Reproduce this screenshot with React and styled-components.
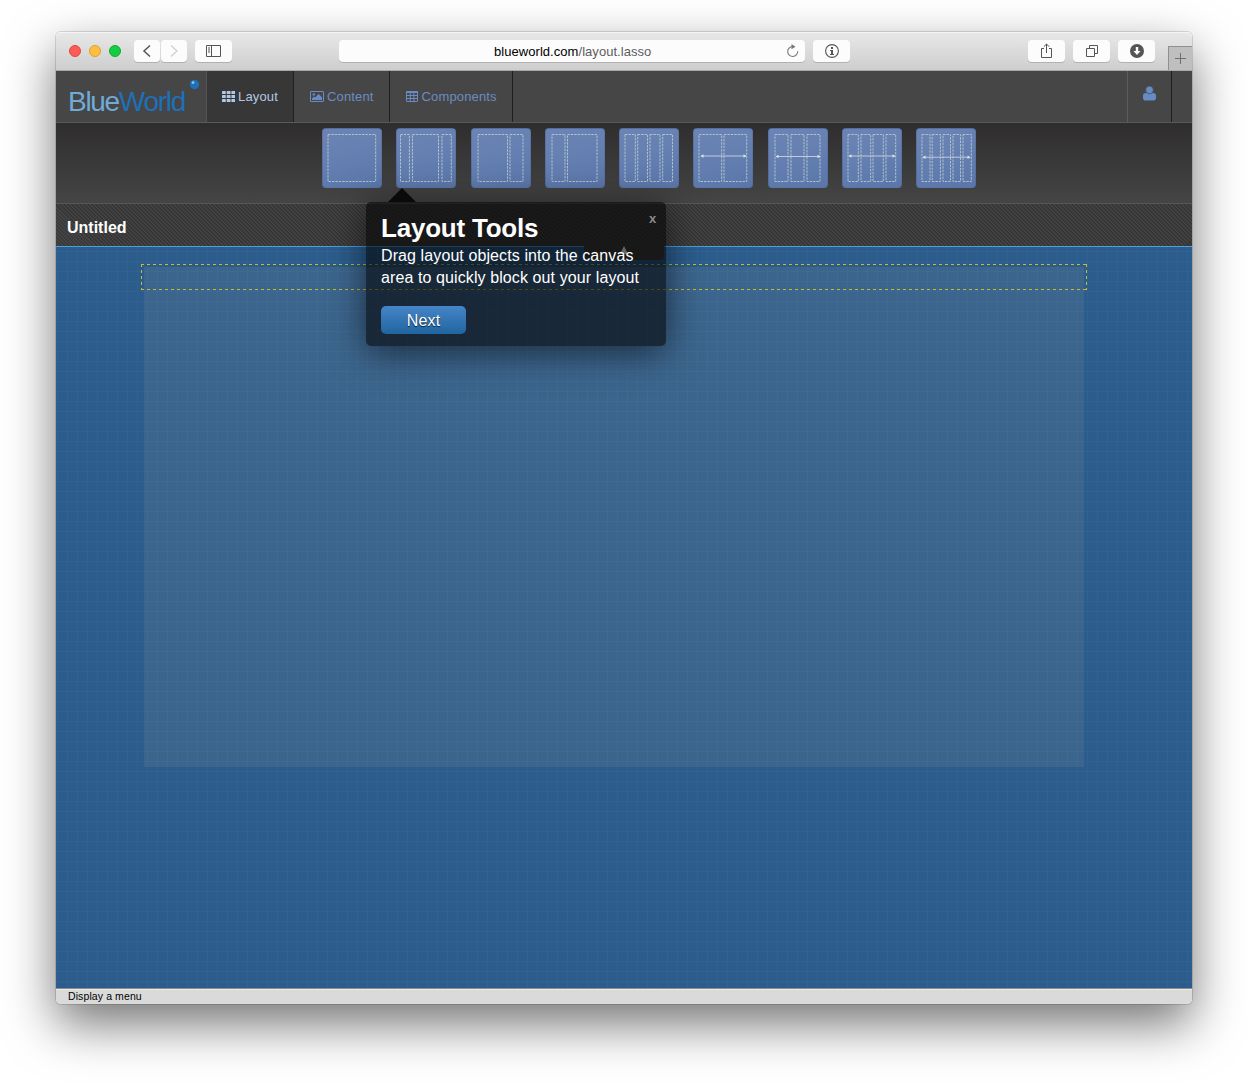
import React from "react";
import styled, { createGlobalStyle, css } from "styled-components";

const GlobalStyle = createGlobalStyle`
  * { box-sizing: border-box; }
  body {
    margin: 0;
    background: #fff;
    font-family: "Liberation Sans", Arial, sans-serif;
    overflow: hidden;
  }
  svg { display: block; flex: none; }
`;

const Desktop = styled.div`
  height: 1084px;
  padding: 32px 56px 80px;
`;

const Window = styled.div`
  position: relative;
  display: flex;
  flex-direction: column;
  width: 1136px;
  height: 972px;
  border-radius: 5px;
  box-shadow: 0 0 0 1px rgba(0, 0, 0, 0.13), 0 20px 50px rgba(0, 0, 0, 0.55);
`;

/* Browser chrome */

const Chrome = styled.header`
  display: flex;
  align-items: flex-start;
  height: 39px;
  padding: 8px 0 0 13px;
  border-radius: 5px 5px 0 0;
  border-bottom: 1px solid #a9a9a9;
  background: linear-gradient(#e8e8e8, #cecece);
  box-shadow: inset 0 1px 0 #f5f5f5;
`;

const Lights = styled.div`
  display: flex;
  gap: 8px;
  padding-top: 5px;
  margin-right: 13px;
`;

const Light = styled.i`
  width: 12px;
  height: 12px;
  border-radius: 50%;
  background: ${(p) => p.$fill};
  border: 1px solid ${(p) => p.$edge};
`;

const ChromeButton = styled.button`
  display: flex;
  align-items: center;
  justify-content: center;
  width: ${(p) => p.$w || 37}px;
  height: 22px;
  margin: 0 ${(p) => p.$after || 0}px 0 0;
  padding: 0;
  border: 0;
  border-radius: 4px;
  background: #fcfcfc;
  color: #555;
  box-shadow: 0 1px 0 rgba(0, 0, 0, 0.16);
`;

const Address = styled.div`
  display: flex;
  align-items: center;
  width: 466px;
  height: 22px;
  margin: 0 8px 0 107px;
  padding: 1px 6px 0 155px;
  border-radius: 4px;
  background: #fcfcfc;
  box-shadow: 0 1px 0 rgba(0, 0, 0, 0.16);
  color: #000;
  font-size: 13px;
  letter-spacing: 0.05px;
  white-space: nowrap;

  span { color: #5c5c5c; }
  svg { margin: -2px 0 0 auto; }
`;

const Spacer = styled.div`
  flex: 1;
`;

const NewTab = styled.div`
  display: flex;
  align-items: center;
  justify-content: center;
  width: 24px;
  height: 24px;
  margin: 6px 0 0 5px;
  border: solid #8f8f8f;
  border-width: 1px 0 0 1px;
  background: #bfbfbf;
`;

/* Application */

const NavBar = styled.nav`
  display: flex;
  height: 52px;
  background: #464646;
  border-bottom: 1px solid #5a5a5a;
`;

const Brand = styled.div`
  display: flex;
  width: 151px;
  padding: 15px 0 0 12px;
  border-right: 1px solid #545454;
  color: #1f6fb9;
  font-size: 28px;
  line-height: 32px;
  letter-spacing: -1.3px;
  white-space: nowrap;

  b { font-weight: 400; color: #6fabd9; }
  svg { margin: -7px 0 0 4px; }
`;

const Tab = styled.a`
  display: flex;
  align-items: center;
  gap: ${(p) => p.$gap || 3}px;
  width: ${(p) => p.$w}px;
  padding: 0 0 0 ${(p) => (p.$active ? 15 : 16)}px;
  border-right: 1px solid #1f1f1f;
  color: #6a8cc4;
  font-size: 13px;
  letter-spacing: 0.15px;
  white-space: nowrap;
  ${(p) =>
    p.$active &&
    css`
      background: #373737;
      color: #b0c9e2;
    `}
`;

const Account = styled.div`
  display: flex;
  justify-content: center;
  width: 45px;
  margin: 0 20px 0 auto;
  padding-top: 15px;
  border-left: 1px solid #5c5c5c;
  border-right: 1px solid #1f1f1f;
`;

const Palette = styled.div`
  display: flex;
  justify-content: center;
  gap: 14.25px;
  height: 81px;
  padding: 5px 0 0 50px;
  background: linear-gradient(#2f2d2e, #454545);
  border-bottom: 1px solid #575757;
`;

const Tile = styled.div`
  width: 60px;
  height: 60px;
  border-radius: 4px;
  border: 1px solid rgba(55, 75, 120, 0.25);
  background: linear-gradient(165deg, #6c84b5, #6680b2 40%, #5a76aa);

  svg { margin: -1px; }
`;

const TitleBar = styled.h2`
  display: flex;
  align-items: center;
  height: 43px;
  margin: 0;
  padding: 5px 0 0 11px;
  border-bottom: 1px solid #4a9fdc;
  color: #fff;
  font-size: 16px;
  letter-spacing: 0;
  background-color: #3e3e3e;
  background-image:
    repeating-linear-gradient(45deg, rgba(0, 0, 0, 0.18) 0 1.4px, transparent 1.4px 2.83px),
    repeating-linear-gradient(-45deg, rgba(255, 255, 255, 0.06) 0 0.7px, transparent 0.7px 2.12px);
`;

const Canvas = styled.main`
  flex: 1;
  padding: 17px 105px 0 85px;
  background-color: #2b5c8c;
  background-image:
    linear-gradient(90deg, #306291 1px, transparent 1px),
    linear-gradient(#306291 1px, transparent 1px);
  background-size: 10px 10px;
  background-position: 1px 4px;
`;

const dashX = "repeating-linear-gradient(90deg, #c6be28 0 3px, transparent 3px 6px)";
const dashY = "repeating-linear-gradient(#c6be28 0 3px, transparent 3px 6px)";

const Sheet = styled.div`
  display: grid;
  width: 946px;
  height: 503px;
`;

const SheetFill = styled.div`
  grid-area: 1 / 1;
  margin: 3px 3px 0;
  background: rgba(128, 138, 146, 0.2);
`;

const DropRow = styled.div`
  grid-area: 1 / 1;
  height: 26px;
  background:
    ${dashX} 0 0 / 100% 1px no-repeat,
    ${dashX} 0 100% / 100% 1px no-repeat,
    ${dashY} 0 0 / 1px 100% no-repeat,
    ${dashY} 100% 0 / 1px 100% no-repeat;
`;

const StatusBar = styled.footer`
  display: flex;
  align-items: center;
  height: 16px;
  padding: 0 12px 2px;
  border-top: 1px solid #8c8c8c;
  border-radius: 0 0 5px 5px;
  background: #dadada;
  box-shadow: inset 0 1px 0 #ececec;
  color: #000;
  font-size: 10.5px;
  letter-spacing: 0.1px;
`;

/* Overlays */

const Flap = styled.div`
  position: absolute;
  left: 528px;
  top: 213px;
  width: 80px;
  height: 15px;
  padding: 1px 36px;
  border-radius: 0 0 4px 4px;
  background: #3b3b3b;
`;

const Tour = styled.section`
  position: absolute;
  left: 310px;
  top: 170px;
  width: 300px;
  height: 144px;
  padding: 10px 15px;
  border-radius: 5px;
  background: rgba(2, 2, 2, 0.61);
  box-shadow: 0 6px 36px rgba(0, 0, 0, 0.6);
  color: #fff;

  &::before {
    content: "";
    position: absolute;
    left: 22px;
    top: -14px;
    border: solid transparent;
    border-width: 0 14px 14px;
    border-bottom-color: #0a0a0a;
  }
`;

const TourHead = styled.div`
  display: flex;
  justify-content: space-between;
  height: 33px;
`;

const TourTitle = styled.h1`
  margin: 0;
  font-size: 26px;
  line-height: 32px;
  letter-spacing: -0.22px;
`;

const Close = styled.span`
  margin: -1px -12px 0 0;
  width: 14px;
  color: #898989;
  font-size: 13px;
  font-weight: 700;
  line-height: 16px;
`;

const TourText = styled.p`
  margin: 0 0 17px;
  font-size: 16px;
  line-height: 22px;
  letter-spacing: 0.1px;
  white-space: nowrap;
`;

const NextButton = styled.button`
  display: block;
  width: 85px;
  height: 28px;
  padding: 1px 0 0;
  border: 0;
  border-radius: 5px;
  background: linear-gradient(#4685c8, #20659f);
  color: #fff;
  font: 16px/27px "Liberation Sans", Arial, sans-serif;
  letter-spacing: 0.2px;
  text-shadow: 0 1px 1px rgba(0, 0, 0, 0.75);
`;

const Line = (p) => <path fill="none" stroke="currentColor" {...p} />;

const GridIcon = () => (
  <svg width="13" height="11" viewBox="0 0 13 11" fill="currentColor">
    {[0, 4, 8].map((y) =>
      [0, 4.7, 9.4].map((x) => <rect key={`${x}-${y}`} x={x} y={y} width="3.8" height="3.1" rx="0.6" />)
    )}
  </svg>
);

const PictureIcon = () => (
  <svg width="14" height="11" viewBox="0 0 14 11" fill="currentColor">
    <Line d="M1 .5H13Q13.5.5 13.5 1V10Q13.5 10.5 13 10.5H1Q.5 10.5.5 10V1Q.5.5 1 .5Z" />
    <circle cx="3.8" cy="3.4" r="1.2" />
    <path d="M2 9V7.4L4 5.4 5.2 6.6 8.6 3.1 12 6.4V9Z" />
  </svg>
);

const TableIcon = () => (
  <svg width="12" height="11" viewBox="0 0 12 11">
    <rect width="12" height="2" rx="0.8" fill="currentColor" />
    <Line d="M.5 1V10Q.5 10.5 1 10.5H11Q11.5 10.5 11.5 10V1M.5 4.5H11.5M.5 7.5H11.5M4.3 1V10.5M7.9 1V10.5" />
  </svg>
);

const tiles = [
  { cols: [[6, 53.7]] },
  { cols: [[4.5, 13.4], [16.5, 42.5], [46, 55.3]] },
  { cols: [[7, 36.5], [39, 52]] },
  { cols: [[7, 20], [22.5, 52]] },
  { cols: [[6, 16.3], [18.7, 28.5], [31, 41], [43.7, 53.5]] },
  { cols: [[6, 28.7], [31, 53.7]], arrow: [8, 53, 28] },
  { cols: [[7, 20], [23, 36], [39, 52]], arrow: [8, 52, 28.5] },
  { cols: [[6, 16.3], [19, 28.7], [31, 41.3], [44, 53.7]], arrow: [7, 53, 28] },
  { cols: [[6, 14], [16.2, 24.4], [27, 34.5], [37, 44.5], [47, 55.3]], arrow: [7, 54, 29.2] },
];

const LayoutTile = ({ cols, arrow }) => (
  <Tile>
    <svg width="60" height="60" viewBox="0 0 60 60">
      {cols.map(([a, b]) => (
        <rect key={a} x={a} y="6.5" width={b - a} height="47" fill="none" stroke="#b8c9d0" strokeOpacity="0.9" strokeDasharray="2.4 1" />
      ))}
      {arrow && (
        <g fill="#dce2e8">
          <rect x={arrow[0]} y={arrow[2] - 0.5} width={arrow[1] - arrow[0]} height="1" fill="#bfcbd6" />
          <path d={`M${arrow[0] - 0.5} ${arrow[2]}l3-1.7v3.4zM${arrow[1] + 0.5} ${arrow[2]}l-3-1.7v3.4z`} />
        </g>
      )}
    </svg>
  </Tile>
);

export default function App() {
  return (
    <Desktop>
      <GlobalStyle />
      <Window>
        <Chrome>
          <Lights>
            <Light $fill="#fc5b57" $edge="#e2463f" />
            <Light $fill="#fdbe41" $edge="#dfa034" />
            <Light $fill="#10cf45" $edge="#12ac28" />
          </Lights>
          <ChromeButton $w={26} $after={1}>
            <svg width="10" height="14"><Line d="M8 1.5 2 7l6 5.5" strokeWidth="1.5" /></svg>
          </ChromeButton>
          <ChromeButton $w={26} $after={8}>
            <svg width="10" height="14"><Line d="M2 1.5 8 7 2 12.5" strokeWidth="1.2" stroke="#cfcfcf" /></svg>
          </ChromeButton>
          <ChromeButton>
            <svg width="15" height="12">
              <Line d="M.5.5H14.5V11.5H.5ZM5.5.5V11.5M2 3H4M2 5H4M2 7H4" />
            </svg>
          </ChromeButton>
          <Address>
            blueworld.com<span>/layout.lasso</span>
            <svg width="13" height="14" color="#777">
              <Line d="M6.5 2.5A5 5 0 1 0 11.7 7.3" strokeWidth="1.1" />
              <path d="M5.5 0 9.5 2.7 5.5 5.2Z" fill="#777" />
            </svg>
          </Address>
          <ChromeButton>
            <svg width="14" height="14">
              <circle cx="7" cy="7" r="6.4" fill="none" stroke="#555" strokeWidth="1.1" />
              <path d="M6 3h2v2H6zM5 6h3v4h1v1H5v-1h1V7H5z" fill="#555" />
            </svg>
          </ChromeButton>
          <Spacer />
          <ChromeButton $after={8}>
            <svg width="13" height="16">
              <Line d="M4 5.5H1.5V14.5H11.5V5.5H9M6.5 10V1M3.8 3.7 6.5 1 9.2 3.7" />
            </svg>
          </ChromeButton>
          <ChromeButton $after={8}>
            <svg width="12" height="12">
              <Line d="M.5 3.5H8.5V11.5H.5ZM3.5 3V.5H11.5V8.5H9" />
            </svg>
          </ChromeButton>
          <ChromeButton $after={8}>
            <svg width="14" height="14">
              <circle cx="7" cy="7" r="7" fill="#555" />
              <path d="M5.8 3h2.4v4H10.5L7 11 3.5 7H5.8z" fill="#fff" />
            </svg>
          </ChromeButton>
          <NewTab>
            <svg width="11" height="11"><Line d="M5.5 0V11M0 5.5H11" stroke="#707070" /></svg>
          </NewTab>
        </Chrome>

        <NavBar>
          <Brand>
            <b>Blue</b>World
            <svg width="11" height="12" viewBox="0 0 11 12">
              <circle cx="5.5" cy="5.5" r="4.7" fill="#1f6fb9" />
              <circle cx="4" cy="3.6" r="1.4" fill="#8ec6ee" />
            </svg>
          </Brand>
          <Tab $w={87} $active><GridIcon />Layout</Tab>
          <Tab $w={96}><PictureIcon />Content</Tab>
          <Tab $w={123} $gap={3.5}><TableIcon />Components</Tab>
          <Account>
            <svg width="13" height="15" fill="#658cc4">
              <rect y="7" width="13" height="7.5" rx="2.8" />
              <circle cx="6.5" cy="4" r="3.9" stroke="#464646" strokeWidth="0.7" />
            </svg>
          </Account>
        </NavBar>

        <Palette>
          {tiles.map((tile, i) => <LayoutTile key={i} {...tile} />)}
        </Palette>

        <TitleBar>Untitled</TitleBar>

        <Canvas>
          <Sheet>
            <SheetFill />
            <DropRow />
          </Sheet>
        </Canvas>

        <StatusBar>Display a menu</StatusBar>

        <Flap>
          <svg width="8" height="8"><path d="M4 0 8 8H0Z" fill="#fff" /></svg>
        </Flap>

        <Tour>
          <TourHead>
            <TourTitle>Layout Tools</TourTitle>
            <Close>x</Close>
          </TourHead>
          <TourText>
            Drag layout objects into the canvas
            <br />
            area to quickly block out your layout
          </TourText>
          <NextButton>Next</NextButton>
        </Tour>
      </Window>
    </Desktop>
  );
}
